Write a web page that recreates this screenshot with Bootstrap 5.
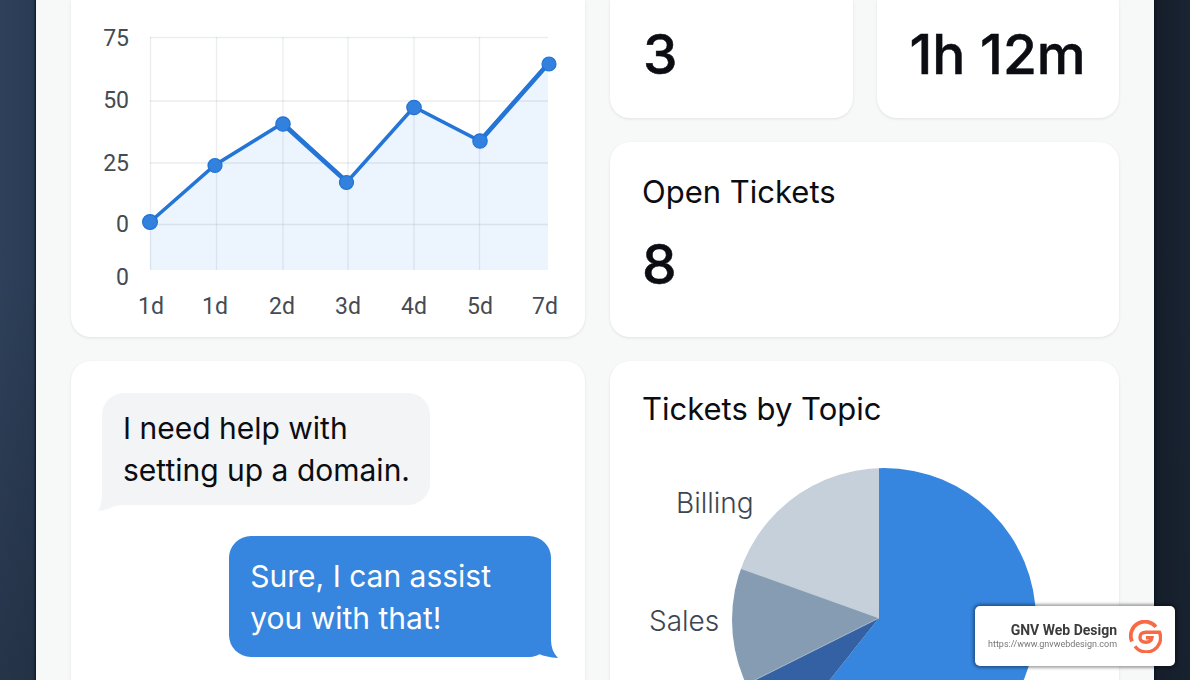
<!DOCTYPE html>
<html lang="en">
<head>
<meta charset="utf-8">
<meta name="viewport" content="width=device-width, initial-scale=1">
<title>Support dashboard</title>
<link href="https://cdn.jsdelivr.net/npm/bootstrap@5.3.0/dist/css/bootstrap.min.css" rel="stylesheet">
<script src="https://cdn.jsdelivr.net/npm/bootstrap@5.3.0/dist/js/bootstrap.bundle.min.js"></script>
<style>
body{font-family:Inter,"Liberation Sans",sans-serif;color:#0b0d12}
.stage{background:linear-gradient(180deg,rgba(20,30,40,0) 40%,rgba(20,30,40,.35)),linear-gradient(90deg,#2f405a 0,#2a3b54 36px,#151d29 calc(100% - 36px),#1a2433 100%);height:100vh;padding:0 36px;overflow:hidden}
.board{background:#f7f8f8;padding:0 35px;display:grid;grid-template-columns:514fr 509fr;gap:24px 25px;box-shadow:0 0 2px 1px #0a1224;min-height:100%}
.panel{background:#fff;border-radius:20px;box-shadow:0 1px 3px rgba(30,40,50,.1)}
.panel.top-cut{border-top-left-radius:0;border-top-right-radius:0}
.stat{font-size:55px;line-height:64px;font-weight:500;-webkit-text-stroke:.5px}
.title{font-size:31px;line-height:40px;font-weight:400}
.metric{padding:22px 33px 32px}
.metric-open{padding:30px 32px 36px}
.plot{display:block;width:100%;height:auto}
.axis{font-family:Roboto,sans-serif;font-size:23px;fill:#444b53}
.label-topic{font-size:28px;font-weight:300;fill:#3c4652}
.chat{padding:32px 32px 32px 31px}
.bubble{position:relative;font-size:30px;line-height:42px;border-radius:22px}
.bubble.ask{background:#f2f4f6;margin-bottom:31px;padding:14px 20px 14px 21px}
.bubble.reply{background:#3685de;color:#fff;padding:19px 60px 18px 21px;margin-right:2px}
.tail{position:absolute;bottom:-6px;width:40px;height:30px}
.ask .tail{left:-4px}
.reply .tail{right:-7px;bottom:-1px}
.maker{right:15px;bottom:14px;width:200px;height:60px;padding:0 13px;background:#fff;border-radius:5px;box-shadow:0 0 3px 2px rgba(0,0,0,.35);font-family:Roboto,sans-serif}
.maker-name{font-size:14px;line-height:16px;font-weight:700;color:#3c3c3c}
.maker-url{font-size:9px;line-height:13px;color:#777}
</style>
</head>
<body class="overflow-hidden">
<div class="stage">
<main class="board">
  <section class="panel top-cut" aria-label="Tickets over time">
    <svg class="plot" viewBox="0 0 514 337" role="img" aria-label="Line chart of tickets">
      <path d="M79 222 144 165 212 123 276 182 343 107 409 141 477 64V270H79Z" fill="#ecf4fe"/>
      <g stroke="#1e3250" stroke-opacity=".09" stroke-width="1.3">
        <path d="M79 37.500H477M79 101H477M79 163H477M79 224.500H477" fill="none"/>
        <path d="M79.500 37V270M145.500 37V270M212 37V270M277 37V270M343 37V270M408.500 37V270" fill="none"/>
      </g>
      <path d="M79 222 144 165 212 123 276 182 343 107 409 141 477 64" fill="none" stroke="#2475d6" stroke-width="3.600"/>
      <path d="M212 124 276 182M409 141 477 64" fill="none" stroke="#2475d6" stroke-width="4.600"/>
      <g fill="#3381de" stroke="#2272d3" stroke-width="1.200">
        <circle cx="79" cy="222" r="7.400"/><circle cx="144" cy="165.500" r="7"/><circle cx="212" cy="124" r="7.200"/><circle cx="275.500" cy="182.500" r="7"/><circle cx="343" cy="107.500" r="7.200"/><circle cx="409" cy="141" r="7.200"/><circle cx="478" cy="64" r="7"/>
      </g>
      <g class="axis" text-anchor="end">
        <text x="58" y="46">75</text><text x="58" y="108">50</text><text x="58" y="171">25</text><text x="58" y="232">0</text><text x="58" y="285">0</text>
      </g>
      <g class="axis" text-anchor="middle">
        <text x="80" y="314">1d</text><text x="144" y="314">1d</text><text x="211" y="314">2d</text><text x="277" y="314">3d</text><text x="343" y="314">4d</text><text x="409" y="314">5d</text><text x="474" y="314">7d</text>
      </g>
    </svg>
  </section>

  <div class="d-flex flex-column gap-4">
    <div class="d-flex gap-4">
      <section class="panel top-cut metric w-50"><div class="stat">3</div></section>
      <section class="panel top-cut metric w-50"><div class="stat text-nowrap">1h 12m</div></section>
    </div>
    <section class="panel metric-open flex-grow-1">
      <h2 class="title mb-3 pb-1">Open Tickets</h2>
      <div class="stat">8</div>
    </section>
  </div>

  <section class="panel chat d-flex flex-column" aria-label="Chat">
    <div class="bubble ask align-self-start">
      <svg class="tail" viewBox="0 0 40 30" aria-hidden="true"><path d="M4 0V12Q4 24 0 30Q7 30 14 26Q19 24 26 24H40V0Z" fill="#f2f4f6"/></svg>
      <div class="position-relative">I need help with<br>setting up a domain.</div>
    </div>
    <div class="bubble reply align-self-end">
      <svg class="tail" viewBox="0 0 40 30" aria-hidden="true"><path d="M33 0V12Q33 23 40 30Q28 29 21 26Q16 29 8 29H0V0Z" fill="#3685de"/></svg>
      <div class="position-relative">Sure, I can assist<br>you with that!</div>
    </div>
  </section>

  <section class="panel pt-4">
    <h2 class="title mb-0 mt-1 px-4 ms-2">Tickets by Topic</h2>
    <svg class="plot" viewBox="0 0 509 340" role="img" aria-label="Pie chart of tickets by topic">
      <clipPath id="disc"><circle cx="274" cy="191" r="152"/></clipPath>
      <g clip-path="url(#disc)">
        <path d="M269 0H509V350H141L269 189Z" fill="#3685de"/>
        <path d="M269 0V189L93 126V0Z" fill="#c6d0db"/>
        <path d="M269 189 93 126V277Z" fill="#869cb3"/>
        <path d="M269 189 93 277V350H141Z" fill="#3361a3"/>
        <path d="M93 126 269 189 93 277" fill="none" stroke="#c6d0db" stroke-opacity=".6"/>
      </g>
      <text class="label-topic" x="66" y="84">Billing</text>
      <text class="label-topic" x="39" y="202">Sales</text>
    </svg>
  </section>
</main>
</div>

<a href="https://www.gnvwebdesign.com" class="maker position-fixed d-flex align-items-center justify-content-end text-decoration-none">
  <span class="d-flex flex-column text-end me-2 pe-1">
    <span class="maker-name">GNV Web Design</span>
    <span class="maker-url">https://www.gnvwebdesign.com</span>
  </span>
  <svg width="33" height="33" viewBox="0 0 33 33" fill="none" stroke="#f86a45" aria-hidden="true">
    <path d="M3 21.500A14.200 14.200 0 0 1 27 6.800" stroke-width="3.800"/>
    <path d="M6 26.200A14.200 14.200 0 0 0 30.500 12.200H17Q11 12.200 11 17.200T17 22.200Q22.300 22.200 23 17.800H17" stroke-width="3.400"/>
  </svg>
</a>
</body>
</html>
